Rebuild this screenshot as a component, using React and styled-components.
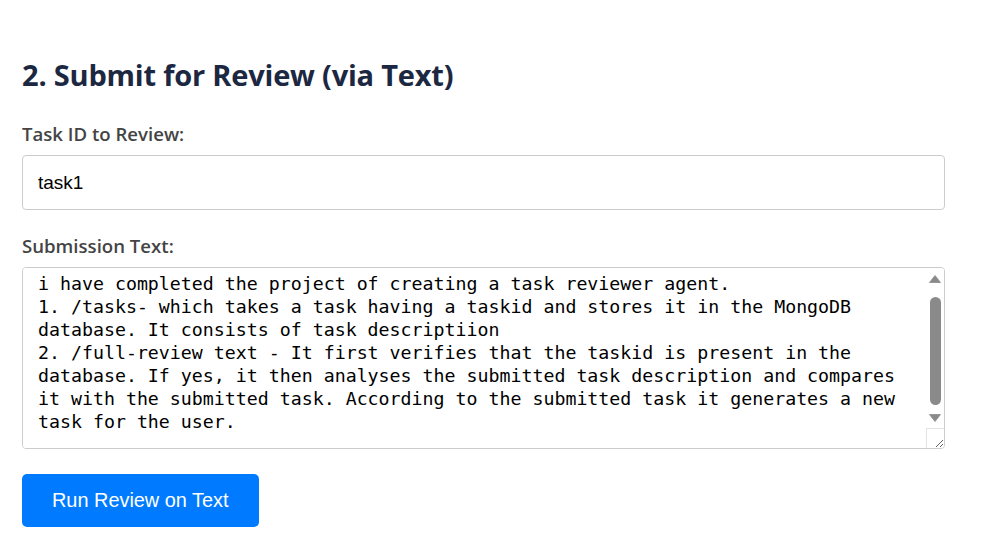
import React, { useLayoutEffect, useRef } from "react";
import styled, { createGlobalStyle } from "styled-components";

const GlobalStyle = createGlobalStyle`
  html, body {
    margin: 0;
    padding: 0;
    background: #fff;
  }
  body {
    font-family: "Open Sans", Lato, sans-serif;
  }
`;

const Section = styled.section`
  padding: 0 40px 0 22px;
`;

const Title = styled.h2`
  margin: 0;
  padding-top: 57px;
  font-size: 29px;
  line-height: 36px;
  font-weight: 700;
  color: #1c2841;
  letter-spacing: -0.2px;
`;

const Label = styled.label`
  display: block;
  margin: ${(p) => (p.$first ? "30px" : "25px")} 0 10px;
  font-size: 18.6px;
  line-height: 22px;
  font-weight: 600;
  color: #444;
`;

const Input = styled.input`
  display: block;
  box-sizing: border-box;
  width: 100%;
  height: 55px;
  padding: 15px;
  border: 1px solid #ccc;
  border-radius: 4px;
  font-family: "Liberation Sans", Arial, sans-serif;
  font-size: 19px;
  line-height: 23px;
  color: #000;
  outline: none;
`;

const AreaWrap = styled.div`
  position: relative;
`;

const TextArea = styled.textarea`
  display: block;
  box-sizing: border-box;
  width: 100%;
  height: 182px;
  padding: 15px 32px 15px 15px;
  border: 1px solid #ccc;
  border-radius: 4px;
  font-family: "DejaVu Sans Mono", "Liberation Mono", monospace;
  font-size: 18.25px;
  line-height: 23px;
  color: #000;
  overflow-y: scroll;
  resize: vertical;
  outline: none;
`;

/* drawn scrollbar lying over the textarea's right edge */
const ScrollBar = styled.div`
  position: absolute;
  top: 1px;
  right: 1px;
  bottom: 1px;
  width: 18px;
  display: flex;
  flex-direction: column;
  align-items: center;
  pointer-events: none;
`;

const Arrow = styled.div`
  height: 21px;
  width: 18px;
  display: flex;
  align-items: center;
  justify-content: center;
  margin-top: ${(p) => (p.$down ? "auto" : "0")};
`;

const Thumb = styled.div`
  margin-top: 8px;
  width: 11px;
  height: 108px;
  border-radius: 6px;
  background: #8a8a8a;
`;

const Corner = styled.div`
  box-sizing: border-box;
  width: 18px;
  height: 20px;
  border-top: 1px solid #e3e3e3;
  border-left: 1px solid #e3e3e3;
`;

const Button = styled.button`
  margin-top: 25px;
  padding: 15px 30px;
  border: none;
  border-radius: 5px;
  background: #007bff;
  color: #fff;
  font-family: "Liberation Sans", Arial, sans-serif;
  font-size: 19.9px;
  line-height: 23px;
  cursor: pointer;
`;

const submission = `i have completed the project of creating a task reviewer agent.
1. /tasks- which takes a task having a taskid and stores it in the MongoDB database. It consists of task descriptiion
2. /full-review text - It first verifies that the taskid is present in the database. If yes, it then analyses the submitted task description and compares it with the submitted task. According to the submitted task it generates a new task for the user.`;

const Triangle = ({ down }) => (
  <svg width="12" height="8" viewBox="0 0 12 8">
    <path
      d={down ? "M0.5 0.5 H11.5 L6 7.5 Z" : "M0.5 7.5 H11.5 L6 0.5 Z"}
      fill="#8a8a8a"
      stroke="#8a8a8a"
      strokeWidth="0.8"
      strokeLinejoin="round"
    />
  </svg>
);

const App = () => {
  const areaRef = useRef(null);

  useLayoutEffect(() => {
    const el = areaRef.current;
    if (el) el.scrollTop = el.scrollHeight;
  }, []);

  return (
    <Section>
      <GlobalStyle />
      <Title>2. Submit for Review (via Text)</Title>
      <Label $first htmlFor="taskId">Task ID to Review:</Label>
      <Input id="taskId" type="text" defaultValue="task1" />
      <Label htmlFor="submission">Submission Text:</Label>
      <AreaWrap>
        <TextArea
          id="submission"
          ref={areaRef}
          defaultValue={submission}
          spellCheck={false}
        />
        <ScrollBar>
          <Arrow>
            <Triangle />
          </Arrow>
          <Thumb />
          <Arrow $down>
            <Triangle down />
          </Arrow>
          <Corner />
        </ScrollBar>
      </AreaWrap>
      <Button>Run Review on Text</Button>
    </Section>
  );
};

export default App;
